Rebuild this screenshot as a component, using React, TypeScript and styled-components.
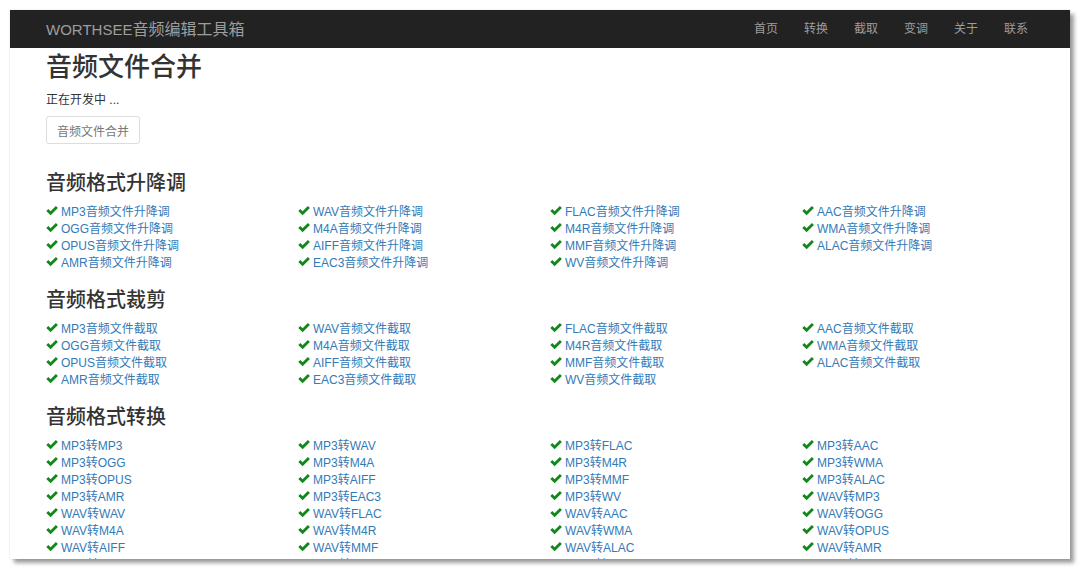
import { FC } from 'react';
import styled, { createGlobalStyle } from 'styled-components';

const GlobalStyle = createGlobalStyle`
	html, body {
		margin: 0;
		padding: 0;
		background: #fff;
	}
	body {
		font-family: 'Liberation Sans', 'Noto Sans CJK SC', sans-serif;
		color: #333;
	}
`;

const FORMATS = ['MP3', 'WAV', 'FLAC', 'AAC', 'OGG', 'M4A', 'M4R', 'WMA', 'OPUS', 'AIFF', 'MMF', 'ALAC', 'AMR', 'EAC3', 'WV'];
const NAV = ['首页', '转换', '截取', '变调', '关于', '联系'];

// Window frame with the drop shadow
const Frame = styled.div`
	margin: 10px;
	width: 1060px;
	height: 549px;
	overflow: hidden;
	background: #fff;
	box-shadow: 0 0 2px rgba(0, 0, 0, 0.12), 4px 4px 4px rgba(0, 0, 0, 0.38);
`;

const Navbar = styled.header`
	height: 38px;
	background: #222;
	display: flex;
	align-items: center;
	justify-content: space-between;
	padding: 0 42px 3px 36px;
	box-sizing: border-box;
`;

const Brand = styled.a`
	font-size: 15px;
	color: #9d9d9d;
	text-decoration: none;
	white-space: nowrap;

	span {
		font-size: 16px;
	}
`;

const NavList = styled.nav`
	display: flex;
	gap: 26px;
`;

const NavLink = styled.a`
	font-size: 12px;
	color: #9d9d9d;
	text-decoration: none;
`;

const Container = styled.main`
	padding: 0 16px 0 36px;
`;

const Title = styled.h1`
	margin: 4px 0 0;
	font-size: 26px;
	line-height: 30px;
	font-weight: 500;
	color: #333;
`;

const Lead = styled.p`
	margin: 10px 0 0;
	font-size: 12px;
	line-height: 17px;
`;

const Button = styled.button`
	margin: 7px 0 9px;
	height: 28px;
	padding: 0 10px;
	font-family: inherit;
	font-size: 12px;
	color: #777;
	background: #fff;
	border: 1px solid #ddd;
	border-radius: 3px;
`;

const SectionTitle = styled.h2`
	margin: 18px 0 7px;
	font-size: 20px;
	line-height: 24px;
	font-weight: 500;
	color: #333;
`;

const LinkGrid = styled.ul`
	list-style: none;
	margin: 0;
	padding: 0;
	display: grid;
	grid-template-columns: repeat(4, 252px);
`;

const LinkItem = styled.li`
	display: flex;
	align-items: center;
	gap: 3px;
	height: 17px;
	font-size: 12px;
	white-space: nowrap;

	a {
		color: #337ab7;
		text-decoration: none;
	}
`;

const Check: FC = () => (
	<svg width="12" height="11" viewBox="0 0 12 11">
		<path d="M0.3 6 L2.3 4 L4.6 6.3 L9.9 1 L11.9 3 L4.6 10.3 Z" fill="#13881a" />
	</svg>
);

const Section: FC<{ title: string; items: string[] }> = ({ title, items }) => (
	<section>
		<SectionTitle>{title}</SectionTitle>
		<LinkGrid>
			{items.map(item => (
				<LinkItem key={item}>
					<Check />
					<a href="#">{item}</a>
				</LinkItem>
			))}
		</LinkGrid>
	</section>
);

const App: FC = () => {
	const convert = FORMATS.flatMap(src => FORMATS.map(dst => `${src}转${dst}`));

	return (
		<>
			<GlobalStyle />
			<Frame>
				<Navbar>
					<Brand href="#">
						WORTHSEE<span>音频编辑工具箱</span>
					</Brand>
					<NavList>
						{NAV.map(n => (
							<NavLink key={n} href="#">
								{n}
							</NavLink>
						))}
					</NavList>
				</Navbar>
				<Container>
					<Title>音频文件合并</Title>
					<Lead>正在开发中 ...</Lead>
					<Button>音频文件合并</Button>
					<Section title="音频格式升降调" items={FORMATS.map(f => `${f}音频文件升降调`)} />
					<Section title="音频格式裁剪" items={FORMATS.map(f => `${f}音频文件截取`)} />
					<Section title="音频格式转换" items={convert} />
				</Container>
			</Frame>
		</>
	);
};

export default App;
